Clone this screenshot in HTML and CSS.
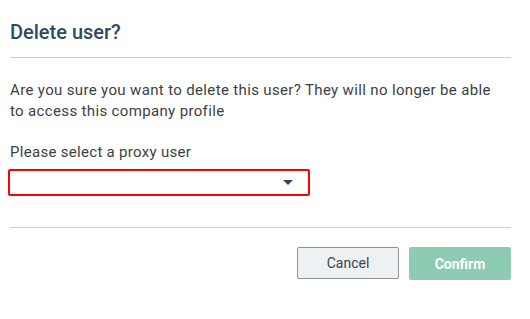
FILE: index.html
```html
<!DOCTYPE html>
<html lang="en">
<head>
    <meta charset="UTF-8">
    <meta name="viewport" content="width=device-width, initial-scale=1.0">
    <title>Delete user?</title>
    <link rel="stylesheet" href="styles.css">
</head>
<body>
    <div class="modal">
        <div class="modal-header">
            <h2 class="modal-title">Delete user?</h2>
        </div>

        <div class="modal-body">
            <p class="modal-text">Are you sure you want to delete this user? They will no longer be able to access this company profile</p>

            <label class="field-label" for="proxy-user">Please select a proxy user</label>
            <div class="select-box" id="proxy-user">
                <span class="select-value"></span>
                <span class="select-arrow"></span>
            </div>
        </div>

        <div class="modal-footer">
            <button class="btn btn-cancel">Cancel</button>
            <button class="btn btn-confirm" disabled>Confirm</button>
        </div>
    </div>
</body>
</html>
```

FILE: styles.css
```css
body {
    margin: 0;
    background-color: #fff;
    font-family: Roboto, "Liberation Sans", sans-serif;
    color: #3b3f44;
}

.modal {
    width: 501px;
    padding: 0 19px 0 10px;
}

.modal-header {
    padding: 20px 0 13px;
    border-bottom: 1px solid #c8d2d5;
}

.modal-title {
    margin: 0;
    font-size: 20px;
    line-height: 24px;
    font-weight: 500;
    color: #2d4a5f;
}

.modal-body {
    padding: 22px 0 31px;
    border-bottom: 1px solid #c8d2d5;
}

.modal-text {
    max-width: 492px;
    margin: 0 0 20px;
    font-size: 15px;
    line-height: 21px;
    letter-spacing: 0.35px;
}

.field-label {
    display: block;
    font-size: 15px;
    line-height: 21px;
    letter-spacing: 0.3px;
}

.select-box {
    margin: 6px 0 0 -2px;
    width: 275px;
    height: 23px;
    border: 2px solid #f00;
    border-radius: 2px;
    display: flex;
    align-items: center;
    justify-content: space-between;
    padding: 0 15px 0 8px;
}

.select-arrow {
    width: 0;
    height: 0;
    border-left: 5px solid transparent;
    border-right: 5px solid transparent;
    border-top: 5px solid #2d4a5f;
}

.modal-footer {
    display: flex;
    justify-content: flex-end;
    align-items: flex-start;
    gap: 10px;
    padding-top: 19px;
}

.btn {
    width: 102px;
    height: 33px;
    border-radius: 2px;
    font-family: Roboto, "Liberation Sans", sans-serif;
    font-size: 14px;
}

.btn-cancel {
    background-color: #eef1f4;
    border: 1px solid #8c8f93;
    color: #3d4247;
    height: 32px;
}

.btn-confirm {
    background-color: #8dcbb2;
    border: none;
    color: #fff;
    font-weight: 700;
}
```
